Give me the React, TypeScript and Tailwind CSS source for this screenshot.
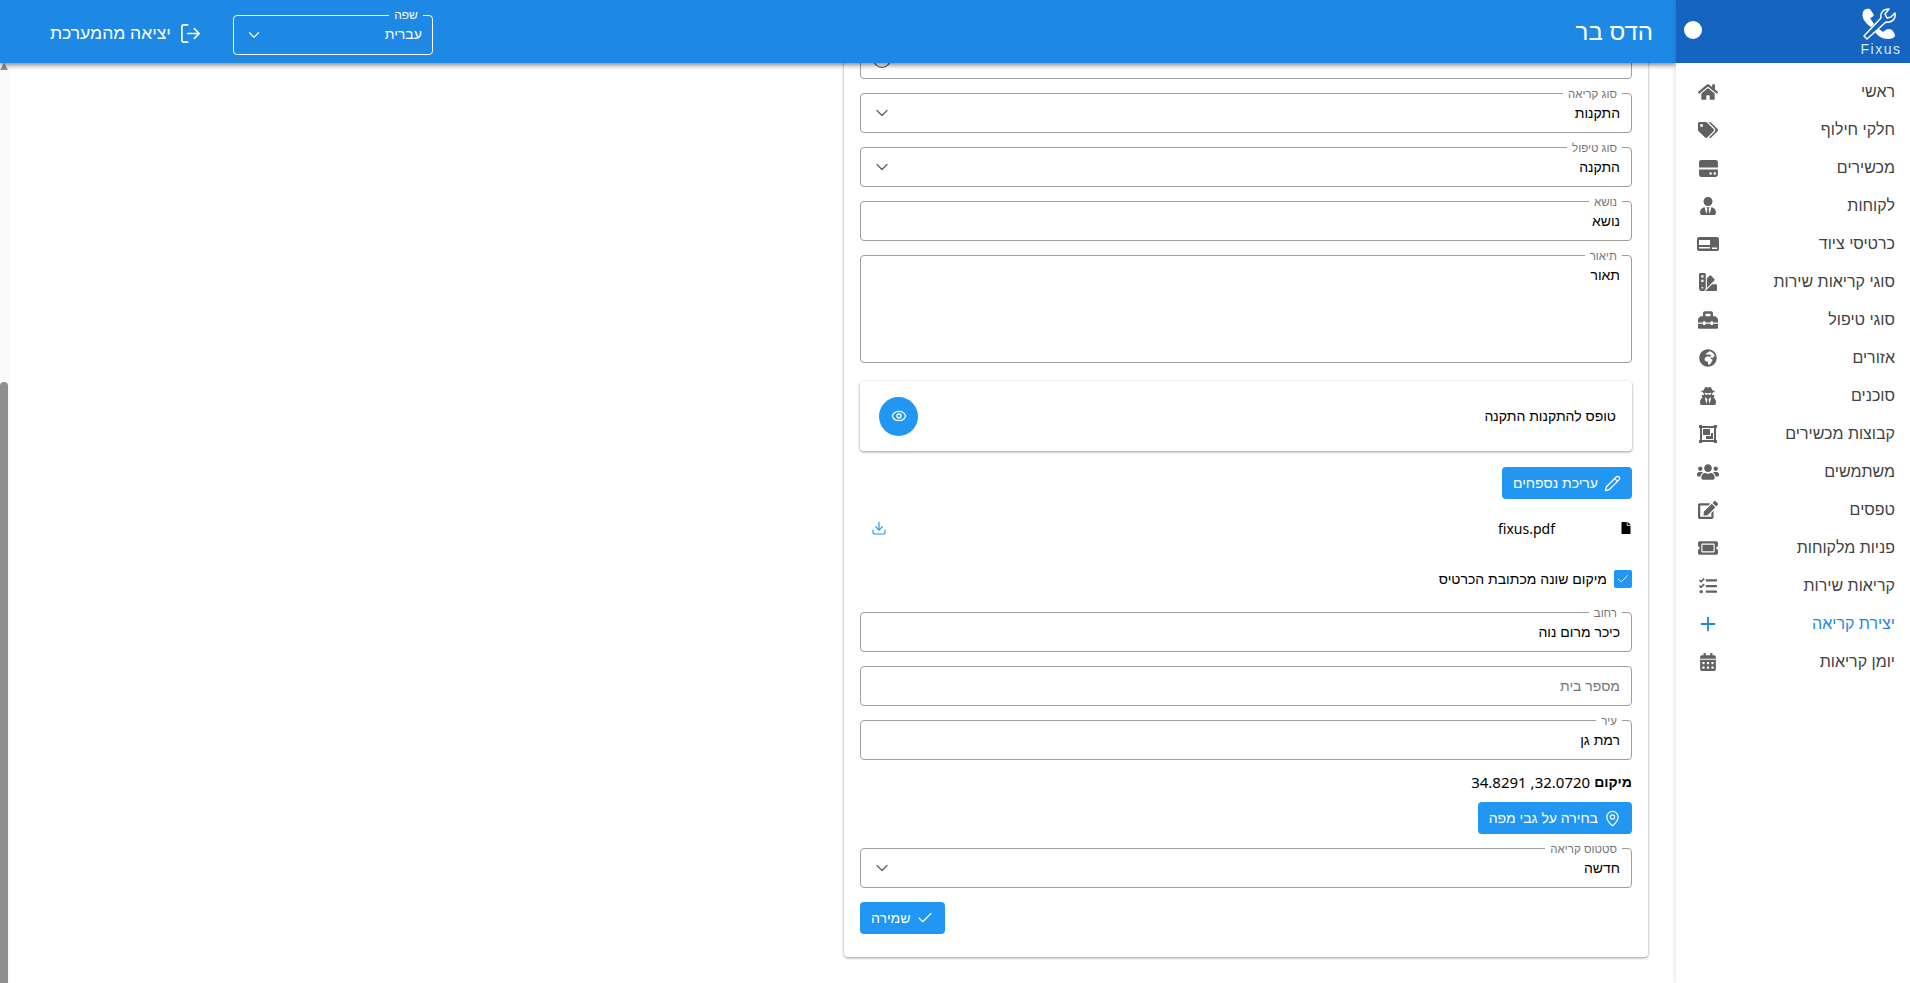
import { ReactNode } from "react";
import { IconType } from "react-icons";
import {
  FaCalendarAlt,
  FaEdit,
  FaFile,
  FaGlobeAfrica,
  FaHome,
  FaSwatchbook,
  FaTags,
  FaTasks,
  FaTicketAlt,
  FaToolbox,
  FaUserSecret,
  FaUserTie,
  FaUsers,
} from "react-icons/fa";
import { Check, ChevronDown, Clock, Download, Eye, LogOut, MapPin, Pencil, Plus } from "lucide-react";

function DeviceIcon({ size }: { size?: number | string }) {
  return (
    <svg width={size} height={size} viewBox="0 0 20 20" fill="currentColor">
      <path d="M3 2h14a2 2 0 0 1 2 2v5H1V4a2 2 0 0 1 2-2z" />
      <path fillRule="evenodd" d="M1 11h18v5a2 2 0 0 1-2 2H3a2 2 0 0 1-2-2zm11 2.5a1.2 1.2 0 1 0 0 2.4 1.2 1.2 0 0 0 0-2.4zm4 0a1.2 1.2 0 1 0 0 2.4 1.2 1.2 0 0 0 0-2.4z" />
    </svg>
  );
}

function EquipmentCardIcon({ size }: { size?: number | string }) {
  return (
    <svg width={size} height={size} viewBox="0 0 22 22" fill="currentColor">
      <path fillRule="evenodd" d="M2 4h18a2 2 0 0 1 2 2v10a2 2 0 0 1-2 2H2a2 2 0 0 1-2-2V6a2 2 0 0 1 2-2zm0 3v5h11V7zm0 7v1.5h11V14zm13 .5V16h5v-1.5z" />
    </svg>
  );
}

function GroupIcon({ size }: { size?: number | string }) {
  return (
    <svg width={size} height={size} viewBox="0 0 18 18" fill="currentColor">
      <path fillRule="evenodd" d="M0 0h3v1h12V0h3v3h-1v12h1v3h-3v-1H3v1H0v-3h1V3H0zm3 3v12h12V3z" />
      <path d="M4 4h7v6H4z" />
      <path d="M12 8h2v6H7v-3h5z" />
    </svg>
  );
}

const navItems: { label: string; icon: IconType; size: number }[] = [
  { label: "ראשי", icon: FaHome, size: 20 },
  { label: "חלקי חילוף", icon: FaTags, size: 20 },
  { label: "מכשירים", icon: DeviceIcon, size: 21 },
  { label: "לקוחות", icon: FaUserTie, size: 18 },
  { label: "כרטיסי ציוד", icon: EquipmentCardIcon, size: 22 },
  { label: "סוגי קריאות שירות", icon: FaSwatchbook, size: 18 },
  { label: "סוגי טיפול", icon: FaToolbox, size: 20 },
  { label: "אזורים", icon: FaGlobeAfrica, size: 18 },
  { label: "סוכנים", icon: FaUserSecret, size: 18 },
  { label: "קבוצות מכשירים", icon: GroupIcon, size: 18 },
  { label: "משתמשים", icon: FaUsers, size: 22 },
  { label: "טפסים", icon: FaEdit, size: 20 },
  { label: "פניות מלקוחות", icon: FaTicketAlt, size: 20 },
  { label: "קריאות שירות", icon: FaTasks, size: 18 },
];

function Field({ label, value, select, placeholder }: { label?: string; value?: string; select?: boolean; placeholder?: string }) {
  return (
    <div className="relative flex h-[40px] items-center justify-between rounded border border-[#9e9e9e] bg-white px-[11px]">
      {label ? (
        <span className="absolute -top-[7px] right-[9px] bg-white px-[5px] text-[11.5px] leading-[14px] text-[#757575]">{label}</span>
      ) : null}
      <span className={`text-[14px] ${placeholder ? "text-[#757575]" : "text-black"}`}>{value ?? placeholder}</span>
      {select ? <ChevronDown size={20} strokeWidth={1.5} className="text-[#616161]" /> : null}
    </div>
  );
}

function BlueButton({ icon, children }: { icon: ReactNode; children: ReactNode }) {
  return (
    <button type="button" className="flex h-[32px] items-center gap-[6px] rounded bg-[#2196f3] px-[11px] text-[14px] text-white">
      {icon}
      {children}
    </button>
  );
}

export default function App() {
  return (
    <div dir="rtl" className="flex h-[983px] w-[1910px] overflow-hidden bg-white font-['Liberation_Sans',sans-serif]">
      <aside className="z-20 flex w-[234px] shrink-0 flex-col bg-white shadow-[0_0_5px_rgba(0,0,0,0.15)]">
        <div className="flex h-[63px] items-start justify-between bg-[#1565c0] pr-[4px] pl-[8px]">
          <div dir="ltr" className="flex w-[50px] flex-col items-center pt-[6px]">
            <svg width="50" height="36" viewBox="0 0 50 36" fill="white">
              <path d="M7 6c1-3 4-4 7-3l4 6c-1 2-3 3-4 3l4 6-3 3C9 17 5 11 7 6z" />
              <path d="M19 26l4-3 4 3c2-2 4-3 6-3 3 0 5 3 6 6 0 3-4 4-7 4-6 0-10-3-13-7z" />
              <path d="M8 30l17-18c-1-5 2-9 8-9l-4 5 2 4 4-1 4-4c1 6-3 10-9 9L11 33z" stroke="white" strokeWidth="1.5" fill="#1565c0" strokeLinejoin="round" />
            </svg>
            <span className="mt-[1px] text-[14px] leading-[12px] tracking-[1.5px] text-[#dbe7f5]">Fixus</span>
          </div>
          <span className="mt-[21px] h-[18px] w-[18px] rounded-full bg-white" />
        </div>
        <nav className="flex flex-col pt-[10px]">
          {navItems.map((item) => (
            <div key={item.label} className="flex h-[38px] items-center justify-between pr-[15px] pl-[20px] text-[16px] text-[#424242]">
              <span>{item.label}</span>
              <span className="flex w-[24px] justify-center text-[#616161]">
                <item.icon size={item.size} />
              </span>
            </div>
          ))}
          <div className="flex h-[38px] items-center justify-between pr-[15px] pl-[20px] text-[16px] text-[#1e88e5]">
            <span>יצירת קריאה</span>
            <span className="flex w-[24px] justify-center">
              <Plus size={22} strokeWidth={2} />
            </span>
          </div>
          <div className="flex h-[38px] items-center justify-between pr-[15px] pl-[20px] text-[16px] text-[#424242]">
            <span>יומן קריאות</span>
            <span className="flex w-[24px] justify-center text-[#616161]">
              <FaCalendarAlt size={18} />
            </span>
          </div>
        </nav>
      </aside>

      <div className="flex min-w-0 flex-1 flex-col">
        <header className="z-10 flex h-[63px] shrink-0 items-center justify-between bg-[#1e88e5] pr-[23px] pl-[50px] text-white shadow-[0_2px_5px_rgba(0,0,0,0.5)]">
          <h1 className="text-[24px] font-normal">הדס בר</h1>
          <div className="flex items-center gap-[31px]">
            <div className="relative mt-[6px] flex h-[40px] w-[200px] items-center justify-between rounded border border-white pr-[10px] pl-[11px] text-[14px]">
              <span className="absolute -top-[8px] right-[9px] bg-[#1e88e5] px-[5px] text-[12px] leading-[14px]">שפה</span>
              <span>עברית</span>
              <ChevronDown size={18} strokeWidth={1.5} />
            </div>
            <div className="mt-[4px] flex items-center gap-[8px] text-[17.5px]">
              <LogOut size={23} strokeWidth={1.75} />
              <span>יציאה מהמערכת</span>
            </div>
          </div>
        </header>

        <div className="flex min-h-0 flex-1">
          <main className="flex min-w-0 flex-1 flex-col justify-end overflow-hidden pb-[26px]">
            <div className="mr-[28px] w-[804px] shrink-0 rounded bg-white px-[16px] pb-[23px] shadow-[0_1px_3px_rgba(0,0,0,0.4)]">
              <div className="flex flex-col gap-[14px]">
                <div className="relative flex h-[40px] items-center justify-end rounded border border-[#9e9e9e] px-[11px]">
                  <Clock size={20} strokeWidth={1.5} className="text-[#616161]" />
                </div>
                <Field label="סוג קריאה" value="התקנות" select />
                <Field label="סוג טיפול" value="התקנה" select />
                <Field label="נושא" value="נושא" />
                <div className="relative h-[108px] rounded border border-[#9e9e9e] px-[11px] pt-[9px] text-[14px] text-black">
                  <span className="absolute -top-[7px] right-[9px] bg-white px-[5px] text-[11.5px] leading-[14px] text-[#757575]">תיאור</span>
                  תאור
                </div>
              </div>

              <div className="mt-[18px] flex h-[70px] items-center justify-between rounded bg-white pr-[16px] pl-[19px] shadow-[0_1px_3px_rgba(0,0,0,0.4)]">
                <span className="text-[14px] text-black">טופס להתקנות התקנה</span>
                <span className="flex h-[39px] w-[39px] items-center justify-center rounded-full bg-[#2196f3] text-white">
                  <Eye size={16} strokeWidth={2} />
                </span>
              </div>

              <div className="mt-[16px] flex">
                <BlueButton icon={<Pencil size={17} strokeWidth={1.75} />}>עריכת נספחים</BlueButton>
              </div>

              <div className="mt-[17px] flex h-[24px] items-center justify-between pl-[11px]">
                <div className="flex items-center">
                  <FaFile size={12} className="text-black" />
                  <span dir="ltr" className="mr-[65px] font-['Noto_Sans',sans-serif] text-[14px] text-black">fixus.pdf</span>
                </div>
                <Download size={16} strokeWidth={1.75} className="text-[#2196f3]" />
              </div>

              <div className="mt-[30px] flex h-[18px] items-center gap-[7px] text-[14px] text-black">
                <span className="flex h-[18px] w-[18px] items-center justify-center rounded-[2px] bg-[#2196f3] text-white">
                  <Check size={14} strokeWidth={1.5} />
                </span>
                מיקום שונה מכתובת הכרטיס
              </div>

              <div className="mt-[24px] flex flex-col gap-[14px]">
                <Field label="רחוב" value="כיכר מרום נוה" />
                <Field placeholder="מספר בית" />
                <Field label="עיר" value="רמת גן" />
              </div>

              <p className="mt-[12px] flex h-[20px] items-center gap-[4px] text-black">
                <span className="text-[14px] font-bold">מיקום</span>
                <span className="font-['Noto_Sans',sans-serif] text-[15px]">32.0720, 34.8291</span>
              </p>

              <div className="mt-[10px] flex">
                <BlueButton icon={<MapPin size={17} strokeWidth={1.75} />}>בחירה על גבי מפה</BlueButton>
              </div>

              <div className="mt-[14px]">
                <Field label="סטטוס קריאה" value="חדשה" select />
              </div>

              <div className="mt-[14px] flex justify-end">
                <BlueButton icon={<Check size={18} strokeWidth={1.5} />}>שמירה</BlueButton>
              </div>
            </div>
          </main>

          <div className="flex w-[10px] shrink-0 flex-col items-end bg-[#fafafa]">
            <span className="h-0 w-0 border-x-[4px] border-b-[7px] border-x-transparent border-b-[#8f8f8f]" />
            <span className="mt-[312px] w-[8px] flex-1 rounded-t-[4px] bg-[#8f8f8f]" />
          </div>
        </div>
      </div>
    </div>
  );
}
